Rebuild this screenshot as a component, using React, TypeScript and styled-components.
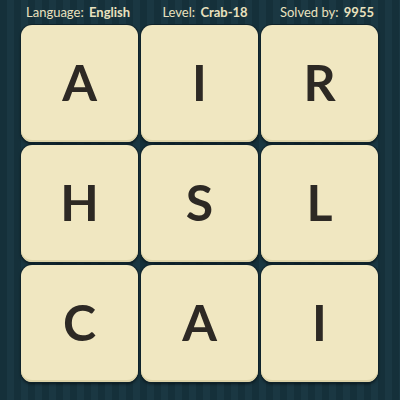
import styled, { createGlobalStyle } from 'styled-components'

const GlobalStyle = createGlobalStyle`
  html, body {
    margin: 0;
    padding: 0;
    background: #16303a;
  }
`

const Screen = styled.div`
  width: 400px;
  height: 400px;
  overflow: hidden;
  display: flex;
  flex-direction: column;
  background: repeating-linear-gradient(
    90deg,
    #15303a 0px,
    #15303a 7px,
    #1a3742 7px,
    #1a3742 14px
  );
  font-family: Lato, 'Noto Sans', sans-serif;
`

const InfoBar = styled.div`
  height: 25px;
  display: flex;
  align-items: center;
  justify-content: space-between;
  padding: 0 26px 2px 26px;
  box-sizing: border-box;
  color: #e9e1bf;
  font-size: 13px;
`

const InfoItem = styled.span`
  white-space: nowrap;

  b {
    font-weight: 700;
    margin-left: 2px;
  }
`

const Board = styled.div`
  display: grid;
  grid-template-columns: repeat(3, 117px);
  grid-auto-rows: 117px;
  gap: 3px;
  padding-left: 21px;
`

const Tile = styled.div`
  background: #f0e7c1;
  border-radius: 11px;
  box-shadow:
    0 0 0 1px #0f232b,
    inset 0 -2px 0 #ddd3a8,
    0 2px 3px rgba(0, 0, 0, 0.55);
  display: flex;
  align-items: center;
  justify-content: center;
  padding-bottom: 3px;
  box-sizing: border-box;
  color: #2d2924;
  font-size: 50px;
  font-weight: 700;
  line-height: 1;
`

const letters = ['A', 'I', 'R', 'H', 'S', 'L', 'C', 'A', 'I']

export default function App() {
  return (
    <>
      <GlobalStyle />
      <Screen>
        <InfoBar>
          <InfoItem>
            Language: <b>English</b>
          </InfoItem>
          <InfoItem>
            Level: <b>Crab-18</b>
          </InfoItem>
          <InfoItem>
            Solved by: <b>9955</b>
          </InfoItem>
        </InfoBar>
        <Board>
          {letters.map((l, i) => (
            <Tile key={i}>{l}</Tile>
          ))}
        </Board>
      </Screen>
    </>
  )
}
